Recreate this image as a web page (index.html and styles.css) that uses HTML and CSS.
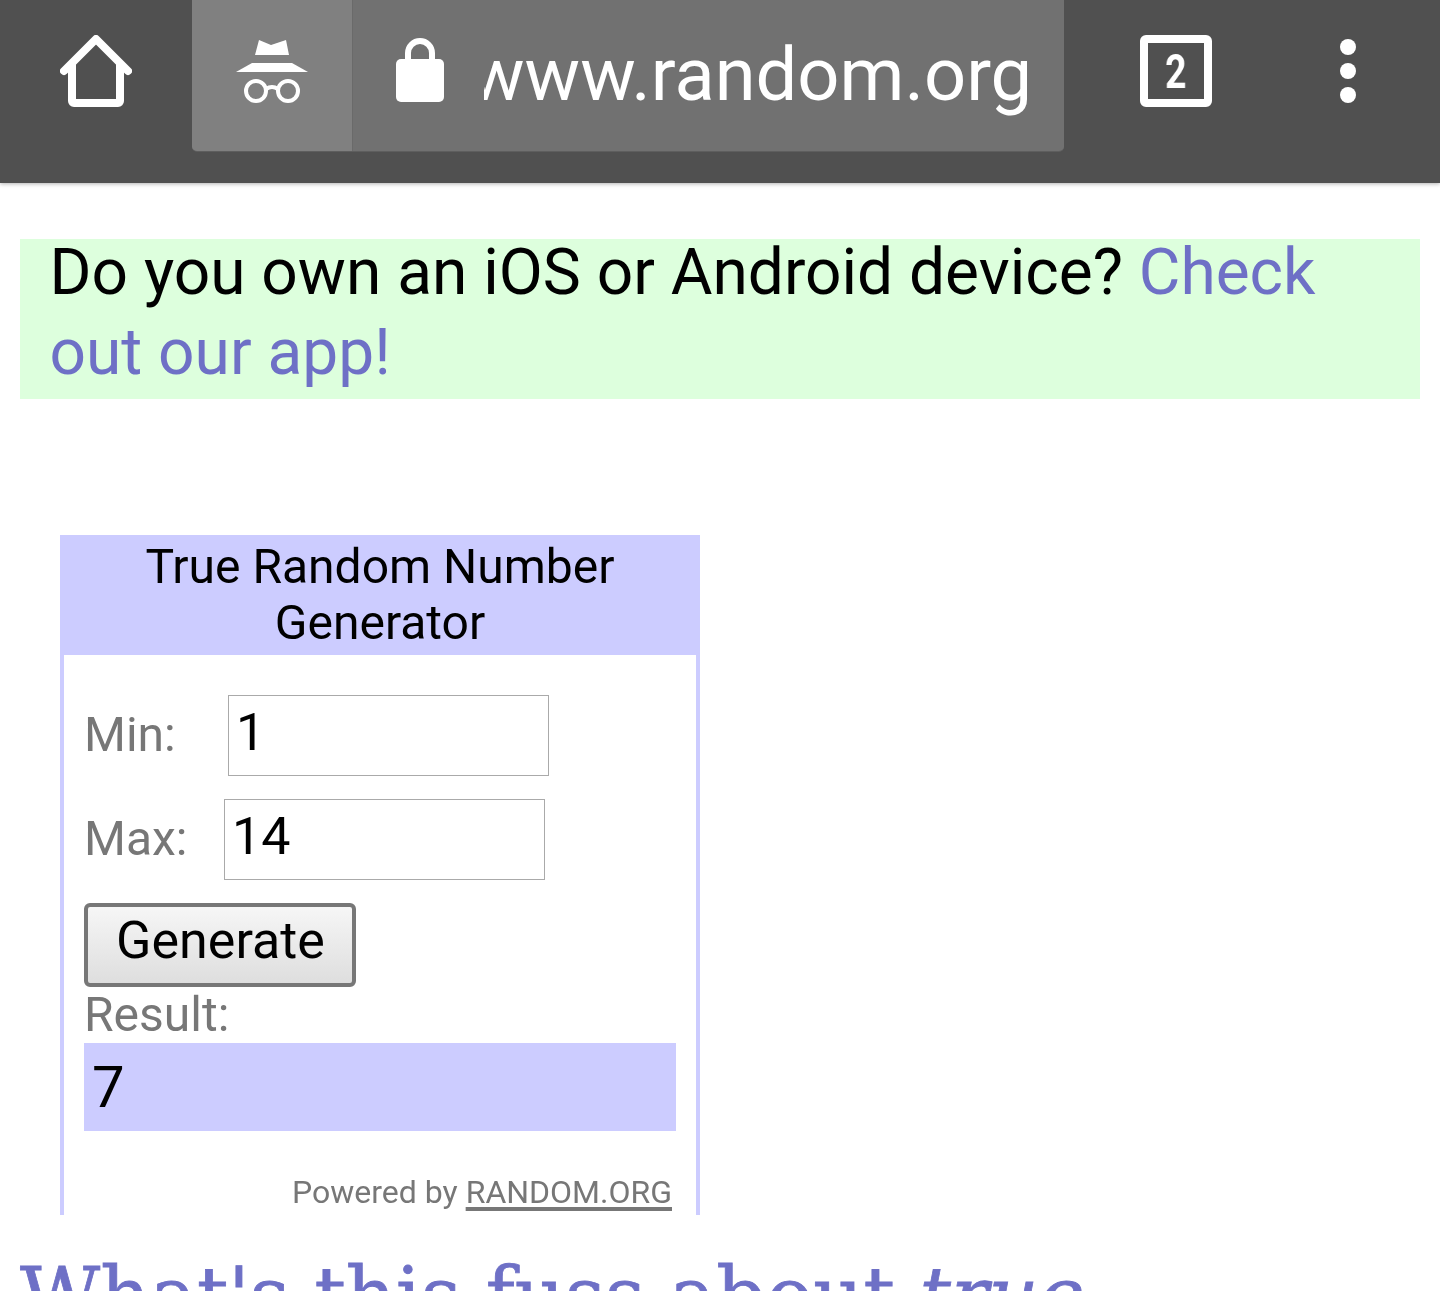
FILE: index.html
```html
<!DOCTYPE html>
<html lang="en">
<head>
    <meta charset="UTF-8">
    <meta name="viewport" content="width=device-width, initial-scale=1.0">
    <title>True Random Number Generator</title>
    <link rel="stylesheet" href="styles.css">
</head>
<body>
    <header class="toolbar">
        <div class="home-btn">
            <svg width="72" height="72" viewBox="0 0 72 72">
                <path d="M4 36 L36 4 L68 36 M12 30 V66 a2 2 0 0 0 2 2 H58 a2 2 0 0 0 2 -2 V30" class="icon-line"/>
            </svg>
        </div>
        <div class="omnibox">
            <div class="incognito">
                <svg width="72" height="66" viewBox="0 0 72 66">
                    <path d="M23 1 L35 6 L50 1 L53 16 H19 Z" class="icon-fill"/>
                    <path d="M16 24 H56 L72 33 H0 Z" class="icon-fill"/>
                    <circle cx="20" cy="52" r="10" class="icon-thin"/>
                    <circle cx="52" cy="52" r="10" class="icon-thin"/>
                    <path d="M30 50 Q36 46 42 50" class="icon-thin"/>
                </svg>
            </div>
            <div class="url-box">
                <svg class="lock" width="48" height="64" viewBox="0 0 48 64">
                    <path d="M12 24 V15 a12 12 0 0 1 24 0 V24" class="icon-lock"/>
                    <rect x="0" y="21" width="48" height="43" rx="5" class="icon-fill"/>
                </svg>
                <div class="url-clip"><span class="url-text">www.random.org</span></div>
            </div>
        </div>
        <div class="tabs-btn"><span class="tabs-count">2</span></div>
        <div class="menu-btn">
            <span class="dot"></span>
            <span class="dot"></span>
            <span class="dot"></span>
        </div>
    </header>

    <main class="page">
        <div class="app-banner">
            <p class="app-text">Do you own an iOS or Android device? <a href="#">Check out our app!</a></p>
        </div>

        <section class="widget">
            <h2 class="widget-title">True Random Number Generator</h2>
            <div class="widget-body">
                <div class="field field-min">
                    <label for="min">Min:</label>
                    <input type="text" id="min" value="1">
                </div>
                <div class="field field-max">
                    <label for="max">Max:</label>
                    <input type="text" id="max" value="14">
                </div>
                <button type="button" class="generate">Generate</button>
                <div class="result-label">Result:</div>
                <div class="result">7</div>
                <div class="powered">Powered by <a href="#">RANDOM.ORG</a></div>
            </div>
        </section>

        <h1 class="fuss">What's this fuss about <em>true</em></h1>
    </main>
</body>
</html>
```

FILE: styles.css
```css
html, body {
    margin: 0;
    padding: 0;
    height: 1291px;
    overflow: hidden;
    background-color: #fff;
}

body {
    font-family: Roboto, "Liberation Sans", sans-serif;
}

/* browser chrome */
.toolbar {
    display: flex;
    height: 183px;
    background-color: #505050;
    box-shadow: 0 1px 4px rgba(0, 0, 0, 0.3);
    position: relative;
}

.home-btn {
    width: 192px;
    padding-top: 35px;
    padding-left: 60px;
    box-sizing: border-box;
}

.home-btn svg {
    display: block;
}

.omnibox {
    display: flex;
    width: 872px;
    height: 152px;
    border-radius: 0 0 5px 5px;
    overflow: hidden;
    border-bottom: 1px solid #5e5e5e;
    box-sizing: border-box;
}

.incognito {
    width: 161px;
    padding: 39px 0 0 44px;
    box-sizing: border-box;
    background-color: #808080;
    border-right: 1px solid #6a6a6a;
}

.incognito svg {
    display: block;
}

.url-box {
    flex: 1;
    display: flex;
    background-color: #717171;
}

.lock {
    display: block;
    margin: 38px 0 0 43px;
}

.url-clip {
    width: 560px;
    margin-left: 40px;
    overflow: hidden;
    height: 151px;
}

.url-text {
    display: block;
    margin-left: -15px;
    font-size: 74px;
    line-height: 149px;
    color: #fff;
    white-space: nowrap;
    will-change: transform;
}

.icon-line {
    fill: none;
    stroke: #fff;
    stroke-width: 8;
    stroke-linecap: round;
    stroke-linejoin: round;
}

.icon-fill {
    fill: #fff;
}

.icon-thin {
    fill: none;
    stroke: #fff;
    stroke-width: 4;
}

.icon-lock {
    fill: none;
    stroke: #fff;
    stroke-width: 6;
}

.tabs-btn {
    width: 72px;
    height: 72px;
    margin: 35px 0 0 76px;
    border: 8px solid #fff;
    border-radius: 6px;
    box-sizing: border-box;
    display: flex;
    justify-content: center;
    align-items: center;
}

.tabs-count {
    color: #fff;
    font-size: 48px;
    font-weight: 700;
    transform: scaleX(0.78);
    will-change: transform;
}

.menu-btn {
    display: flex;
    flex-direction: column;
    gap: 8px;
    margin: 39px 0 0 128px;
}

.dot {
    width: 16px;
    height: 16px;
    border-radius: 50%;
    background-color: #fff;
}

/* page */
.page {
    padding: 56px 20px 0;
    will-change: transform;
}

.app-banner {
    display: flex;
    height: 160px;
    padding-left: 29.5px;
    background-color: #dfd;
}

.app-text {
    margin: -6px 0 0;
    font-size: 64px;
    line-height: 80px;
    color: #000;
}

.app-text a {
    color: #6e70c6;
    text-decoration: none;
}

.widget {
    width: 640px;
    height: 680px;
    margin: 136px 0 0 40px;
    box-sizing: border-box;
    border: 4px solid #ccf;
    border-bottom: 0;
    color: #777;
}

.widget-title {
    margin: 0;
    padding-bottom: 4px;
    background-color: #ccf;
    color: #000;
    font-size: 48px;
    font-weight: 400;
    line-height: 56px;
    text-align: center;
}

.widget-body {
    padding: 40px 20px 0;
    font-size: 48px;
}

.field {
    display: flex;
    align-items: center;
    height: 81px;
    margin-bottom: 23px;
}

.field label {
    box-sizing: border-box;
    margin-bottom: 2px;
}

.field-min label {
    width: 144px;
}

.field-max label {
    width: 140px;
}

.field input {
    width: 321px;
    height: 81px;
    box-sizing: border-box;
    border: 1px solid #aaa;
    padding: 0 7px 6px;
    font-family: inherit;
    font-size: 52px;
    color: #000;
    outline: none;
}

.generate {
    display: block;
    width: 272px;
    height: 84px;
    padding: 0 0 10px 1px;
    border: 4px solid #777;
    border-radius: 6px;
    background: linear-gradient(#f6f6f6, #dedede);
    font-family: inherit;
    font-size: 52px;
    color: #000;
}

.result-label {
    line-height: 56px;
}

.result {
    height: 88px;
    padding-left: 8px;
    background-color: #ccf;
    color: #000;
    font-size: 58px;
    line-height: 88px;
}

.powered {
    margin-top: 42px;
    padding-right: 4px;
    font-size: 32px;
    line-height: 38px;
    text-align: right;
}

.powered a {
    color: #777;
    text-decoration: underline;
    text-decoration-thickness: 4px;
    text-underline-offset: 4px;
}

.fuss {
    margin: 36px 0 0;
    font-family: "DejaVu Serif", serif;
    font-size: 78px;
    font-weight: 400;
    line-height: 90px;
    color: #6e70c6;
    white-space: nowrap;
    -webkit-text-stroke: 0.8px #6e70c6;
}
```
